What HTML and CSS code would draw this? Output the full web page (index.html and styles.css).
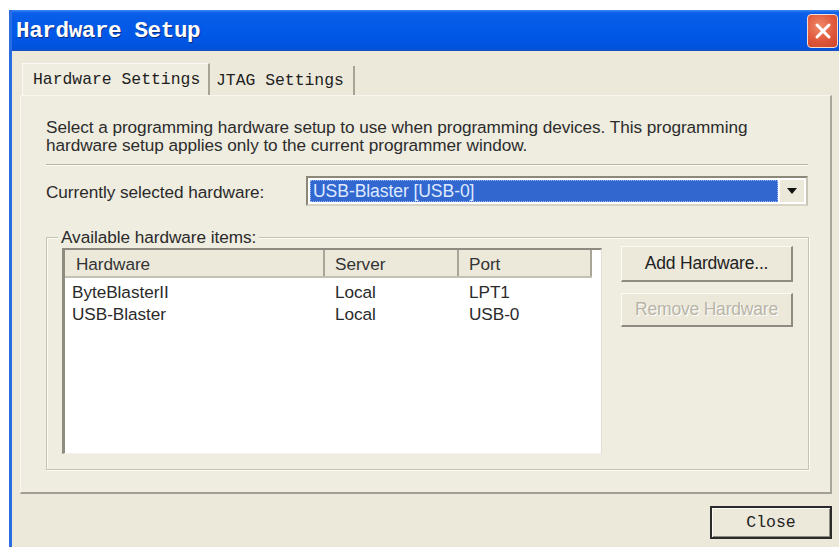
FILE: index.html
```html
<!DOCTYPE html>
<html lang="en">
<head>
<meta charset="utf-8">
<title>Hardware Setup</title>
<link rel="stylesheet" href="styles.css">
</head>
<body>
<div class="window">
  <div class="titlebar">
    <span class="title">Hardware Setup</span>
    <span class="xbtn" aria-label="Close">
      <svg width="22" height="22" viewBox="0 0 22 22"><path d="M5 5 L17 17 M17 5 L5 17" stroke="#fff" stroke-width="3" stroke-linecap="round"/></svg>
    </span>
  </div>
  <div class="client">
    <div class="tabs">
      <div class="tab active">Hardware Settings</div>
      <div class="tab">JTAG Settings</div>
    </div>
    <div class="panel">
      <p class="intro">Select a programming hardware setup to use when programming devices. This programming hardware setup applies only to the current programmer window.</p>
      <div class="rule"></div>
      <div class="sel-row">
        <span class="sel-label">Currently selected hardware:</span>
        <div class="combo">
          <div class="combo-value"><span>USB-Blaster [USB-0]</span></div>
          <div class="combo-arrow"><svg width="10" height="6" viewBox="0 0 10 6"><path d="M0 0 H10 L5 6 Z" fill="#111"/></svg></div>
        </div>
      </div>
      <div class="group">
        <span class="legend">Available hardware items:</span>
        <div class="list">
          <div class="list-head">
            <div class="col c1">Hardware</div>
            <div class="col c2">Server</div>
            <div class="col c3">Port</div>
          </div>
          <div class="row"><span class="c1">ByteBlasterII</span><span class="c2">Local</span><span class="c3">LPT1</span></div>
          <div class="row"><span class="c1">USB-Blaster</span><span class="c2">Local</span><span class="c3">USB-0</span></div>
        </div>
        <div class="side-btns">
          <div class="btn">Add Hardware...</div>
          <div class="btn disabled">Remove Hardware</div>
        </div>
      </div>
    </div>
    <div class="footer">
      <div class="close-btn">Close</div>
    </div>
  </div>
</div>
</body>
</html>
```

FILE: styles.css
```css
html, body {
  margin: 0;
  padding: 0;
  background: #ffffff;
}

body {
  width: 839px;
  height: 547px;
  overflow: hidden;
  font-family: "Liberation Sans", Arial, sans-serif;
  color: #2a2a2a;
}

.window {
  margin: 10px 0 0 9px;
  width: 830px;
  height: 537px;
  border-left: 3px solid #2a6de0;
  box-sizing: border-box;
  display: flex;
  flex-direction: column;
}

/* ---- title bar ---- */
.titlebar {
  height: 41px;
  flex: none;
  display: flex;
  align-items: center;
  justify-content: space-between;
  padding: 0 1px 0 4px;
  background: linear-gradient(#3b86f5 0, #0a5ee8 3px, #0058e8 60%, #0052dc 95%, #1a4fb8 100%);
}

.title {
  font-family: "Liberation Mono", "Courier New", monospace;
  font-weight: bold;
  font-size: 22.6px;
  color: #ffffff;
  text-shadow: 1px 1px 0 #0a2f80;
  letter-spacing: -0.4px;
}

.xbtn {
  width: 31px;
  height: 34px;
  box-sizing: border-box;
  border: 1px solid #f4dcd2;
  border-radius: 4px;
  background: radial-gradient(circle at 40% 35%, #f08a6a 0, #e0573a 55%, #c8442a 100%);
  display: flex;
  align-items: center;
  justify-content: center;
}

/* ---- client area ---- */
.client {
  flex: 1;
  background: #ece9db;
  padding: 12px 7px 0 8px;
  display: flex;
  flex-direction: column;
}

.tabs {
  display: flex;
  height: 32px;
  padding-left: 2px;
}

.tab {
  font-family: "Liberation Mono", "Courier New", monospace;
  font-size: 16.4px;
  color: #1e1e1e;
  display: flex;
  align-items: center;
  box-sizing: border-box;
  border-right: 2px solid #a7a496;
}

.tab.active {
  width: 188px;
  padding-left: 10px;
  border-left: 1px solid #fbfaf4;
  border-top: 1px solid #fbfaf4;
  background: #efece0;
}

.tab:not(.active) {
  width: 145px;
  padding-left: 6px;
  margin-top: 3px;
  height: 29px;
}

.panel {
  height: 399px;
  box-sizing: border-box;
  border: 1px solid #f8f6ee;
  border-right: 2px solid #a8a59a;
  border-bottom: 2px solid #a29e92;
  background: #efece0;
  padding: 22px 22px 0 25px;
  display: flex;
  flex-direction: column;
}

.intro {
  margin: 0;
  font-size: 17.2px;
  line-height: 18px;
  letter-spacing: -0.05px;
  color: #2c2c2c;
}

.rule {
  margin-top: 10px;
  height: 0;
  border-top: 1px solid #b8b4a6;
  border-bottom: 1px solid #fbfaf4;
}

.sel-row {
  margin-top: 10px;
  height: 30px;
  display: flex;
  align-items: center;
  font-size: 17.2px;
  letter-spacing: -0.05px;
}

.sel-label {
  width: 260px;
  padding-top: 2px;
}

.combo {
  width: 502px;
  height: 30px;
  box-sizing: border-box;
  border: 2px solid #8b8878;
  border-right-color: #c9c6b8;
  border-bottom-color: #d8d5c8;
  background: #ffffff;
  display: flex;
  padding: 2px;
}

.combo-value {
  flex: 1;
  background: #3167cf;
  outline: 1px dotted #9cc0ff;
  outline-offset: -1px;
  color: #dfe9ff;
  display: flex;
  align-items: center;
  padding-left: 3px;
  font-size: 17.6px;
  letter-spacing: -0.1px;
}

.combo-arrow {
  width: 24px;
  margin-left: 1px;
  background: #ece9db;
  border-left: 1px solid #fbfaf4;
  display: flex;
  align-items: center;
  justify-content: center;
}

/* ---- group box ---- */
.group {
  margin-top: 31px;
  height: 233px;
  width: 763px;
  box-sizing: border-box;
  border: 1px solid #c8c4b4;
  box-shadow: inset 1px 1px 0 #fbfaf4, 1px 1px 0 #fbfaf4;
  position: relative;
  display: flex;
  padding: 10px 0 0 15px;
}

.legend {
  position: absolute;
  left: 11px;
  top: -10px;
  padding: 0 3px;
  background: #efece0;
  font-size: 17.2px;
  letter-spacing: -0.05px;
  line-height: 18px;
}

.list {
  width: 540px;
  height: 206px;
  box-sizing: border-box;
  background: #ffffff;
  border-left: 3px solid #8e8b80;
  border-top: 2px solid #8e8b80;
  border-right: 1px solid #e2dfd2;
  border-bottom: 1px solid #f4f2ea;
  font-size: 17.2px;
  letter-spacing: -0.05px;
}

.list-head {
  display: flex;
  height: 28px;
  background: #ece9db;
  border-bottom: 2px solid #c5c1b2;
  width: 527px;
  box-sizing: border-box;
}

.list-head .col {
  display: flex;
  align-items: center;
  box-sizing: border-box;
  border-right: 2px solid #a9a699;
  color: #333;
  padding-top: 3px;
}

.list-head .c1 { width: 260px; padding-left: 11px; }
.list-head .c2 { width: 134px; padding-left: 10px; }
.list-head .c3 { width: 133px; padding-left: 10px; }

.row {
  display: flex;
  height: 22px;
  align-items: center;
}

.list-head + .row { margin-top: 3px; }

.row .c1 { width: 262px; padding-left: 7px; box-sizing: border-box; }
.row .c2 { width: 134px; padding-left: 8px; box-sizing: border-box; }
.row .c3 { width: 134px; padding-left: 8px; box-sizing: border-box; }

.side-btns {
  margin-left: 19px;
  margin-top: -2px;
  display: flex;
  flex-direction: column;
  gap: 11px;
}

.btn {
  width: 172px;
  height: 36px;
  box-sizing: border-box;
  border: 1px solid #fbfaf4;
  border-right: 2px solid #8e8b80;
  border-bottom: 2px solid #8e8b80;
  background: #ece9db;
  display: flex;
  align-items: center;
  justify-content: center;
  font-size: 17.5px;
  letter-spacing: -0.2px;
  color: #222;
}

.btn.disabled {
  height: 34px;
  color: #b8b4a6;
  text-shadow: 1px 1px 0 #ffffff;
}

/* ---- footer ---- */
.footer {
  flex: 1;
  display: flex;
  justify-content: flex-end;
  align-items: flex-start;
  padding-top: 12px;
}

.close-btn {
  width: 122px;
  height: 33px;
  box-sizing: border-box;
  border: 2px solid #2b2b2b;
  box-shadow: inset 1px 1px 0 #fbfaf4, inset -1px -1px 0 #8e8b80;
  background: #ece9db;
  display: flex;
  align-items: center;
  justify-content: center;
  font-family: "Liberation Mono", "Courier New", monospace;
  font-size: 16.5px;
  color: #222;
}
```
